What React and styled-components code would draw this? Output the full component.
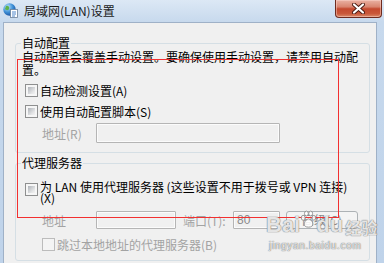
import styled, { createGlobalStyle } from "styled-components";

const GlobalStyle = createGlobalStyle`
  html, body { margin: 0; padding: 0; background: #fff; }
  body { font-family: "Noto Sans CJK SC", "Liberation Sans", sans-serif; }
`;

const Window = styled.div`
  position: relative;
  width: 384px;
  height: 263px;
  overflow: hidden;
  display: flex;
  flex-direction: column;
  background: linear-gradient(180deg, #dce8f5 0, #c7d9ed 22px, #bfd3ea 100%);
  font-family: "Noto Sans CJK SC", "Liberation Sans", sans-serif;
  font-size: 12px;
  color: #000;
`;

const TitleBar = styled.div`
  height: 22px;
  flex: none;
  display: flex;
  align-items: flex-start;
  padding-left: 3px;
`;

const AppIcon = styled.svg`
  width: 15px;
  height: 15px;
  margin-top: 3px;
  flex: none;
`;

const TitleText = styled.div`
  margin: 4px 0 0 6px;
  line-height: 14px;
  font-size: 12px;
  color: #1b1b1b;
`;

const CloseButton = styled.div`
  margin-left: auto;
  margin-right: 2px;
  width: 47px;
  height: 18px;
  box-sizing: border-box;
  border: 1px solid #6e2b1f;
  border-top: none;
  border-radius: 0 0 4px 4px;
  background: linear-gradient(180deg, #eab2a4 0%, #d98570 40%, #c4492f 52%, #c9583a 80%, #d98a6a 100%);
  box-shadow: inset 0 0 0 1px rgba(255, 220, 210, 0.45);
  display: flex;
  align-items: center;
  justify-content: center;
`;

const Body = styled.div`
  flex: 1;
  margin: 0 7px 0 3px;
  background: #f0f0f0;
  border: 1px solid #9fb1c7;
  border-bottom: none;
  padding: 13px 6px 0 11px;
`;

const Group = styled.fieldset`
  margin: ${(p) => (p.$first ? "0" : "3px 0 0")};
  padding: 0 7px 9px 6px;
  border: 1px solid #d5dfe5;
  border-radius: 3px;
  min-width: 0;
`;

const Legend = styled.legend`
  padding: 0 1px;
  margin-left: -1px;
  font-size: 12px;
  line-height: 14px;
`;

const Desc = styled.p`
  margin: 0;
  line-height: 13px;
`;

const CheckRow = styled.div`
  display: flex;
  align-items: ${(p) => (p.$top ? "flex-start" : "center")};
  gap: 2px;
  margin-top: ${(p) => p.$mt || 0}px;
  margin-left: ${(p) => p.$ml || 3}px;
  line-height: ${(p) => (p.$top ? "11px" : "13px")};
  color: ${(p) => (p.$disabled ? "#a3a3a3" : "#000")};
`;

const Box = styled.span`
  flex: none;
  width: 13px;
  height: 13px;
  box-sizing: border-box;
  padding: 2px;
  margin-top: ${(p) => (p.$top ? "2px" : "0")};
  border: 1px solid ${(p) => (p.$disabled ? "#bcbcbc" : "#8e8f8f")};
  background: ${(p) =>
    p.$disabled
      ? "#f4f4f4"
      : "linear-gradient(135deg, #aeb2b8, #e4e5e6 70%, #f2f2f2) content-box, #f6f6f6"};
`;

const FieldRow = styled.div`
  display: flex;
  align-items: center;
  margin-top: ${(p) => p.$mt}px;
  margin-left: 20px;
`;

const Label = styled.span`
  width: ${(p) => p.$w}px;
  margin-left: ${(p) => p.$ml || 0}px;
  flex: none;
  color: #a3a3a3;
  white-space: nowrap;
`;

const Field = styled.input`
  width: ${(p) => p.$w}px;
  height: ${(p) => p.$h}px;
  box-sizing: border-box;
  margin: 0;
  padding: 0 3px;
  border: 1px solid #b5b5b5;
  border-radius: 1px;
  background: #f0f0f0;
  box-shadow: inset 0 0 0 1px #fbfbfb;
  font: 12px "Liberation Sans", sans-serif;
  color: #8a8a8a;
  outline: none;
`;

const PushButton = styled.div`
  width: 72px;
  height: 18px;
  margin-left: 6px;
  box-sizing: border-box;
  border: 1px solid #adb2b5;
  border-radius: 3px;
  background: #f4f4f4;
  color: #8b8b8b;
  display: flex;
  align-items: center;
  justify-content: center;
  line-height: 16px;
`;

const Annotation = styled.div`
  position: absolute;
  left: 17px;
  top: 59px;
  width: 322px;
  height: 159px;
  box-sizing: border-box;
  border: 1px solid #f23030;
  pointer-events: none;
`;

const Watermark = styled.div`
  position: absolute;
  left: 266px;
  top: 210px;
  display: flex;
  flex-direction: column;
  align-items: flex-start;
  pointer-events: none;
  color: rgba(255, 255, 255, 0.82);
  text-shadow: 0 0 1px rgba(110, 110, 110, 0.9), 0 0 1px rgba(110, 110, 110, 0.9);
`;

const WmLogo = styled.div`
  display: flex;
  align-items: flex-end;
  font: bold 22px/26px "Liberation Sans", sans-serif;
`;

const WmCn = styled.span`
  font: bold 16px/22px "Noto Sans CJK SC", sans-serif;
  margin-left: 2px;
`;

const WmUrl = styled.div`
  font: 10px/12px "Liberation Sans", sans-serif;
  letter-spacing: 0.7px;
  margin: 2px 0 0 3px;
`;

function Paw() {
  return (
    <svg width="16" height="22" viewBox="0 0 15 20" style={{ marginBottom: 6 }}>
      <g fill="rgba(255,255,255,0.85)" stroke="#8a8a8a" strokeWidth="0.8">
        <ellipse cx="3" cy="7" rx="1.8" ry="2.3" />
        <ellipse cx="6" cy="3" rx="1.8" ry="2.3" />
        <ellipse cx="10" cy="3" rx="1.8" ry="2.3" />
        <ellipse cx="13" cy="7" rx="1.7" ry="2.2" />
        <path d="M8 8 C4 9 3 14 5 15 C6 16 10 16 11 15 C13 14 12 9 8 8 Z" />
      </g>
    </svg>
  );
}

export default function App() {
  return (
    <>
      <GlobalStyle />
      <Window>
        <TitleBar>
          <AppIcon viewBox="0 0 15 15">
            <defs>
              <radialGradient id="globe" cx="35%" cy="30%" r="70%">
                <stop offset="0" stopColor="#bfe6ff" />
                <stop offset="0.6" stopColor="#3d8fd6" />
                <stop offset="1" stopColor="#1f5aa8" />
              </radialGradient>
            </defs>
            <circle cx="6.5" cy="6.5" r="6.2" fill="url(#globe)" />
            <path d="M3 3 C5 2 7 4 6 6 C5 8 3 7 2 6 Z" fill="#5fb24a" />
            <path d="M8 8 C10 7 12 8 11 10 C10 12 8 11 8 8 Z" fill="#5fb24a" />
            <rect x="7.5" y="6.5" width="7" height="8" fill="#fff" stroke="#6a7f98" strokeWidth="0.8" />
            <path d="M9 9h4M9 11h4M9 13h3" stroke="#3b78c4" strokeWidth="0.9" />
          </AppIcon>
          <TitleText>局域网(LAN)设置</TitleText>
          <CloseButton>
            <svg width="13" height="11" viewBox="0 0 13 11">
              <path d="M2 1.5 L11 9.5 M11 1.5 L2 9.5" stroke="#4a1a12" strokeWidth="4" strokeLinecap="round" />
              <path d="M2 1.5 L11 9.5 M11 1.5 L2 9.5" stroke="#fff" strokeWidth="2.2" strokeLinecap="round" />
            </svg>
          </CloseButton>
        </TitleBar>

        <Body>
          <Group $first>
            <Legend>自动配置</Legend>
            <Desc>自动配置会覆盖手动设置。要确保使用手动设置，请禁用自动配置。</Desc>
            <CheckRow $mt={8}>
              <Box />
              自动检测设置(A)
            </CheckRow>
            <CheckRow $mt={8}>
              <Box />
              使用自动配置脚本(S)
            </CheckRow>
            <FieldRow $mt={5}>
              <Label $w={54}>地址(R)</Label>
              <Field $w={184} $h={20} disabled defaultValue="" />
            </FieldRow>
          </Group>

          <Group>
            <Legend>代理服务器</Legend>
            <CheckRow $mt={11} $top>
              <Box $top />
              <span>
                为 LAN 使用代理服务器 (这些设置不用于拨号或 VPN 连接)
                <br />
                (X)
              </span>
            </CheckRow>
            <FieldRow $mt={8}>
              <Label $w={54}>地址</Label>
              <Field $w={80} $h={18} disabled defaultValue="" />
              <Label $w={50} $ml={7}>端口(T):</Label>
              <Field $w={47} $h={18} disabled defaultValue="80" />
              <PushButton>高级(C)</PushButton>
            </FieldRow>
            <CheckRow $mt={9} $ml={20} $disabled>
              <Box $disabled />
              跳过本地地址的代理服务器(B)
            </CheckRow>
          </Group>
        </Body>

        <Annotation />
        <Watermark>
          <WmLogo>
            Bai
            <Paw />
            du
            <WmCn>经验</WmCn>
          </WmLogo>
          <WmUrl>jingyan.baidu.com</WmUrl>
        </Watermark>
      </Window>
    </>
  );
}
